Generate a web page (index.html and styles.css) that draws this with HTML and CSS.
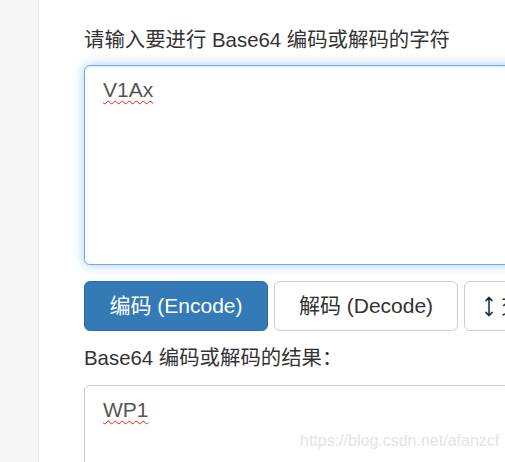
FILE: index.html
```html
<!DOCTYPE html>
<html lang="zh-CN">
<head>
<meta charset="utf-8">
<title>Base64</title>
<link rel="stylesheet" href="styles.css">
</head>
<body>
<div class="page">
  <aside class="sidebar"></aside>
  <main class="main">
    <label class="field-label label-first" for="src">请输入要进行 Base64 编码或解码的字符</label>
    <textarea id="src" class="box box-focus" spellcheck="false">V1Ax</textarea>
    <div class="btn-row">
      <button class="btn btn-primary">编码 (Encode)</button>
      <button class="btn btn-default">解码 (Decode)</button>
      <button class="btn btn-default btn-swap"><svg class="swap-icon" width="8" height="21" viewBox="0 0 8 21" aria-hidden="true"><path d="M4 1.5 V19.5 M1 4.5 L4 1.5 L7 4.5 M1 16.5 L4 19.5 L7 16.5" fill="none" stroke="#2a8ad4" stroke-width="2.2" stroke-linecap="round" stroke-linejoin="round" opacity="0.55"/><path d="M4 1.5 V19.5 M1 4.5 L4 1.5 L7 4.5 M1 16.5 L4 19.5 L7 16.5" fill="none" stroke="#222" stroke-width="1.2" stroke-linecap="round" stroke-linejoin="round"/></svg><span class="swap-text">交换</span></button>
    </div>
    <label class="field-label label-second" for="out">Base64 编码或解码的结果：</label>
    <textarea id="out" class="box box-out" spellcheck="false">WP1</textarea>
  </main>
  <div class="watermark">https://blog.csdn.net/afanzcf</div>
</div>
</body>
</html>
```
FILE: styles.css
```css
html, body {
  margin: 0;
  padding: 0;
  background: #fff;
}
.page {
  position: relative;
  display: flex;
  width: 505px;
  height: 462px;
  overflow: hidden;
  font-family: "Liberation Sans", "Noto Sans CJK SC", sans-serif;
  font-size: 21px;
  line-height: 30px;
  color: #333;
}
.sidebar {
  flex: 0 0 38px;
  background: #f5f5f5;
  border-right: 1px solid #ececec;
}
.main {
  flex: 1 1 auto;
  display: flex;
  flex-direction: column;
  padding-left: 45px;
  padding-top: 25px;
  min-width: 0;
}
.field-label {
  display: block;
  font-weight: normal;
  font-size: 20.4px;
  white-space: nowrap;
}
.label-first {
  margin-bottom: 10px;
}
.label-second {
  margin-top: 12px;
  margin-bottom: 12px;
}
.box {
  display: block;
  box-sizing: border-box;
  width: 600px;
  flex: 0 0 auto;
  margin: 0;
  padding: 9px 18px;
  font-family: "Liberation Sans", "Noto Sans CJK SC", sans-serif;
  font-size: 21px;
  line-height: 30px;
  color: #555;
  background: #fff;
  border: 1.5px solid #ccc;
  border-radius: 6px;
  resize: none;
  outline: none;
  text-decoration: underline wavy #f01c1c;
  text-decoration-thickness: 1px;
  text-underline-offset: 3px;
}
.box-focus {
  height: 200px;
  border-color: #66afe9;
  box-shadow: inset 0 1.5px 1.5px rgba(0,0,0,.075), 0 0 12px rgba(102,175,233,.6);
}
.box-out {
  height: 120px;
}
.btn-row {
  display: flex;
  gap: 6px;
  margin-top: 16px;
  white-space: nowrap;
}
.btn {
  flex: 0 0 auto;
  box-sizing: border-box;
  height: 50px;
  padding: 0 20px;
  font-family: "Liberation Sans", "Noto Sans CJK SC", sans-serif;
  font-size: 21px;
  line-height: 30px;
  border: 1.5px solid #ccc;
  border-radius: 6px;
  cursor: pointer;
}
.btn-primary {
  width: 184px;
  color: #fff;
  background: #337ab7;
  border-color: #2e6da4;
}
.btn-default {
  width: 184px;
  color: #333;
  background: #fff;
}
.btn-swap {
  display: flex;
  align-items: center;
  gap: 8px;
  padding-left: 20px;
}
.swap-icon {
  display: block;
  flex: 0 0 auto;
}
.swap-text {
  display: block;
}
.watermark {
  position: absolute;
  left: 300px;
  top: 431px;
  font-family: "Liberation Sans", sans-serif;
  font-size: 16px;
  line-height: 20px;
  color: #e4e4e4;
  text-shadow: 0 0 1px rgba(255,255,255,.8);
  pointer-events: none;
}
```
